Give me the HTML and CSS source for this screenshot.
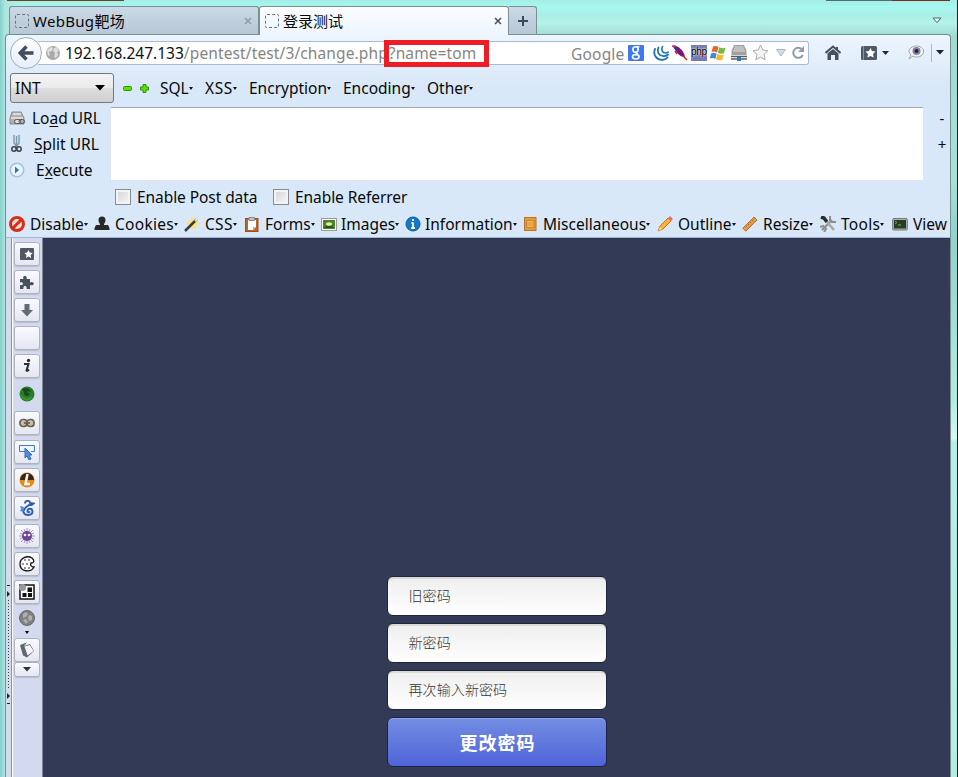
FILE: index.html
```html
<!DOCTYPE html>
<html lang="zh-CN">
<head>
<meta charset="utf-8">
<title>登录测试</title>
<link rel="stylesheet" href="styles.css">
</head>
<body>
<div class="desktop">
<i class="edge edge-left"></i><i class="edge edge-mid"></i><i class="edge edge-right"></i>
<div class="window">
  <div class="tabs">
    <div class="tab tab-idle"><span class="favicon"></span><span class="tab-title">WebBug靶场</span><svg class="close" viewBox="0 0 8 8"><path d="M1 1l6 6M7 1l-6 6"/></svg></div>
    <div class="tab tab-active"><span class="favicon"></span><span class="tab-title">登录测试</span><svg class="close" viewBox="0 0 8 8"><path d="M1 1l6 6M7 1l-6 6"/></svg></div>
    <div class="new-tab"><svg width="12" height="12" viewBox="0 0 12 12"><path d="M6 1v10M1 6h10" stroke="#3b4a5a" stroke-width="2"/></svg></div>
    <svg class="tab-list" width="10" height="7" viewBox="0 0 10 7"><path d="M1 1h8L5 5.6z" fill="#eafffa" stroke="#446a68"/></svg>
  </div>
  <div class="chrome">
    <div class="nav">
      <div class="back"><svg width="16" height="16" viewBox="0 0 16 16"><path d="M8.500 1.500L2.200 8l6.300 6.500M2.500 8H15.500" fill="none" stroke="#414d5c" stroke-width="3.400"/></svg></div>
      <div class="address">
        <svg class="globe" width="16" height="16" viewBox="0 0 16 16"><circle cx="8" cy="8" r="7" fill="#a9a9a9"/><path d="M2 5l4-3 2 1-1 3-3 1 1 3-2 1zM9 3l3-1 2 4-2 1 1 3-2 3-2-1 1-4-2-2z" fill="#dedede"/></svg>
        <span class="url"><b>192.168.247.133</b><span class="path">/pentest/test/3/change.php</span><span class="query">?name=tom</span></span>
        <span class="mark"></span>
        <span class="engine">Google</span>
        <div class="address-icons">
          <svg width="16" height="16" viewBox="0 0 16 16"><rect width="16" height="16" rx="1" fill="#3f77f2"/><g fill="none" stroke="#fff" stroke-width="1.600"><ellipse cx="7.500" cy="4.500" rx="2.600" ry="2.700"/><path d="M8.500 1.800h3M8.500 7.200v1.300l1.500 1"/><ellipse cx="7.800" cy="11.800" rx="3.300" ry="2.200"/></g></svg>
          <svg width="16" height="16" viewBox="0 0 16 16"><g fill="none" stroke="#2074b2" stroke-linecap="round"><path d="M2 4C-.500 10 4 15.500 10 14.800c2-.200 3.500-1 4.500-2.300" stroke-width="1.900"/><path d="M5.500 2.500C3.500 7.500 6.500 11.500 11 11.200c1.800 0 3-.700 4-1.700" stroke-width="1.800"/><path d="M9.500 1.500C8 5 9.500 8 12.500 8c1 0 2-.300 2.800-1" stroke-width="1.600"/></g></svg>
          <svg width="16" height="16" viewBox="0 0 16 16"><path d="M1 1c4-1 11 4 12 11C7 12 4 7 1 1z" fill="#a50e52"/><path d="M2 1l8 9" stroke="#4225ae" stroke-width="2.500"/><path d="M0 1l4 .500M5 9l-2-3M11 11l4 4" stroke="#d02936" stroke-width="1.500"/></svg>
          <span class="php">php</span>
          <svg width="16" height="16" viewBox="0 0 16 16"><path d="M3 1.500q3-1 5.500.500L7 7.500q-2.500-1.500-5.500-.500z" fill="#e8632a"/><path d="M9.300 2.300q3 1.700 6.200.500L14 8.300q-3.200 1-6.200-.500z" fill="#75b943"/><path d="M1.200 8.200q3-1 5.500.500L5.200 14q-2.500-1.500-5.500-.500z" fill="#438bd0"/><path d="M7.400 9q3 1.500 6.300.500L12.200 15q-3.300 1-6.300-.700z" fill="#f4b72d"/></svg>
          <svg width="16" height="16" viewBox="0 0 16 16"><path d="M3 0h10l2.500 6v4H.500V6z" fill="#a0a0a0"/><path d="M3.500 2h9M3 4h10M2 6h12" stroke="#e0e0e0"/><path d="M0 11.500h16M0 14h6m4 0h6" stroke="#5d5d5d" stroke-width="1.600"/><rect x="6" y="12" width="4" height="4" fill="#3077c5"/></svg>
          <svg width="17" height="17" viewBox="0 0 17 17"><path d="M8.500 1l2.200 5 5.300.600-4 3.700 1.200 5.500-4.700-2.700-4.700 2.700L5 10.300 1 6.600 6.300 6z" fill="#f5f5f5" stroke="#aaa"/></svg>
          <svg width="10" height="8" viewBox="0 0 10 8"><path d="M.5.500h9L5 7z" fill="#d5dee7" stroke="#aab5c1"/></svg>
          <svg width="13" height="13" viewBox="0 0 13 13"><path d="M10 3.500a5 5 0 1 0 .800 5.500" fill="none" stroke="#8f9cab" stroke-width="2"/><path d="M12 0v6H6z" fill="#8f9cab"/></svg>
        </div>
      </div>
      <svg class="home" width="16" height="16" viewBox="0 0 16 16"><path d="M.5 8L8 1.500 15.500 8M12 2v3" fill="none" stroke="#46515d" stroke-width="2"/><path d="M2.500 8.500L8 4l5.500 4.500V15H10v-5H6v5H2.500z" fill="#46515d"/></svg>
      <svg class="marks" width="29" height="16" viewBox="0 0 29 16"><rect y="1" width="16" height="14" rx="1.500" fill="#4d5966"/><path d="M2.500 1v14" stroke="#8895a2"/><path d="M9.500 3l1.500 3 3.500.500L12 9l.600 3.500L9.500 11l-3.100 1.500L7 9 4.500 6.500 8 6z" fill="#fff"/><path d="M21 6h7l-3.500 4z" fill="#222a35"/></svg>
      <svg class="eye" width="17" height="15" viewBox="0 0 17 15"><path d="M3 10C-2 6 3 1 8.500 1S17 5 15 9c-2 3-7 4-10 2L1 14z" fill="#f2f2f7" stroke="#a4a4ad"/><circle cx="8.500" cy="6" r="4" fill="#8c8198"/><circle cx="8.500" cy="6" r="2" fill="#1a2455"/></svg>
      <span class="divider"></span>
      <svg width="8" height="5" viewBox="0 0 8 5"><path d="M0 0h8L4 4.500z" fill="#1b2530"/></svg>
    </div>
    <div class="menus">
      <div class="select">INT<svg width="10" height="6" viewBox="0 0 10 6"><path d="M0 0h10L5 5.500z"/></svg></div>
      <svg class="minus" width="9" height="5" viewBox="0 0 9 5"><rect x=".5" y=".5" width="8" height="4" rx="1" fill="#5be000" stroke="#2f9700"/></svg>
      <svg class="plus" width="9" height="9" viewBox="0 0 9 9"><path d="M3 .500h3V3h2.500v3H6v2.500H3V6H.500V3H3z" fill="#5be000" stroke="#2f9700"/></svg>
      <span class="drop m-sql">SQL</span><span class="drop m-xss">XSS</span><span class="drop m-enc">Encryption</span><span class="drop m-cod">Encoding</span><span class="drop">Other</span>
    </div>
    <div class="hackbar">
      <div class="actions">
        <div class="action"><svg width="16" height="15" viewBox="0 0 16 15"><path d="M3 1h9l3 6v6H1V7z" fill="#b0b0b0" stroke="#898989"/><path d="M4 3h8M2 7h12" stroke="#e8e8e8" stroke-width="1.300"/><rect x="5.500" y="8.500" width="6" height="4" rx="2" fill="#ddd" stroke="#555"/><rect x="10" y="8.500" width="5.500" height="4" rx="2" fill="none" stroke="#555"/></svg><span class="load">Lo<u>a</u>d URL</span></div>
        <div class="action"><svg width="16" height="18" viewBox="0 0 16 18"><path d="M5 0v8l4 5M10 0v8l-4 5M7.500 1v10" stroke="#7b98ab" stroke-width="1.400" fill="none"/><circle cx="5" cy="14" r="2.200" fill="none" stroke="#3d4044" stroke-width="1.500"/><circle cx="10" cy="14" r="2.200" fill="none" stroke="#3d4044" stroke-width="1.500"/></svg><span class="split"><u>S</u>plit URL</span></div>
        <div class="action"><svg width="16" height="16" viewBox="0 0 16 16"><circle cx="8" cy="8" r="6.700" fill="#e9f5ff" stroke="#a3c1e2" stroke-width="1.600"/><path d="M6 4.500l4 3.500-4 3.500z" fill="#2875bd"/></svg><span class="exec">E<u>x</u>ecute</span></div>
      </div>
      <div class="textarea"></div>
      <div class="resize"><span>-</span><span>+</span></div>
    </div>
    <div class="checks"><i class="box"></i><span class="post">Enable Post data</span><i class="box"></i><span class="ref">Enable Referrer</span></div>
    <div class="dev">
      <svg viewBox="0 0 16 16"><circle cx="8" cy="8" r="6.500" fill="#ffdfd7" stroke="#d52d18" stroke-width="3"/><path d="M3.500 12.500l9-9" stroke="#d52d18" stroke-width="3"/></svg><span class="drop">Disable</span>
      <svg viewBox="0 0 16 16"><path d="M4.500 4a3.500 3.500 0 0 1 7 0c0 3-1.500 3-1.500 5h4l1.500 3v2H.500v-2L2 9h4c0-2-1.500-2-1.500-5z" fill="#292929"/></svg><span class="drop wide">Cookies</span>
      <svg viewBox="0 0 16 16"><path d="M8 0l2 4 4-2-1 4 3 2-4 2v4l-4-2-4 1 1-4-3-2 4-2z" fill="#ffe37c"/><path d="M1 15L13 3" stroke="#3c3c3c" stroke-width="2.500"/><path d="M11 5l3-3" stroke="#ddd" stroke-width="2.500"/></svg><span class="drop wide">CSS</span>
      <svg viewBox="0 0 16 16"><rect x="1.500" y="2.500" width="12.500" height="13" fill="#bb6528" stroke="#9e4e1b"/><path d="M4 4h8v7l-3 3H4z" fill="#fff"/><path d="M12 11H9v3" fill="#b4b4b4"/><path d="M5 1.500h5.500v3H5z" fill="#c1c6cb" stroke="#888"/></svg><span class="drop">Forms</span>
      <svg viewBox="0 0 16 16"><rect x=".5" y="2.500" width="15" height="12" fill="#fff" stroke="#999"/><path d="M2 4h12v9H2z" fill="#4c8624"/><path d="M3 12l3-3 2 1 2-1 3 3z" fill="#1f5b16"/><ellipse cx="8" cy="8" rx="3" ry="1.800" fill="#e6e9b8"/></svg><span class="drop">Images</span>
      <svg viewBox="0 0 16 16"><circle cx="8" cy="8" r="7" fill="#1478c9" stroke="#0b5ba6"/><path d="M8 3v2M8 6.500V12M6 12h4M6.500 7H8" stroke="#fff" stroke-width="1.800"/></svg><span class="drop">Information</span>
      <svg viewBox="0 0 16 16"><rect x="1.500" y="1.500" width="11.500" height="13" fill="#e39a3c" stroke="#b87526"/><rect x="3.500" y="4.500" width="7.500" height="7" fill="#f3b75b" stroke="#c9842d"/><path d="M4 7h7M4 9h7" stroke="#d9963c"/></svg><span class="drop">Miscellaneous</span>
      <svg viewBox="0 0 16 16"><path d="M1 15l2-5 8-8 3 3-8 8z" fill="#ffb02d" stroke="#c07820"/><path d="M1 15l2-4 2 2z" fill="#ead7b9"/><path d="M11 2l2-2 3 3-2 2z" fill="#df6f82"/></svg><span class="drop">Outline</span>
      <svg viewBox="0 0 16 16"><path d="M.800 12.200L12 1l3 3L3.800 15.200z" fill="#e49a48" stroke="#b56d26"/><path d="M4 10l1 1m1-3l1 1m1-3l1 1m1-3l1 1" stroke="#a9682a"/></svg><span class="drop">Resize</span>
      <svg viewBox="0 0 16 16"><path d="M2 14L12 4M10 0v4l2 2h4M0 11l3-1 3 3-2 3" stroke="#8d8d8d" stroke-width="2" fill="none"/><path d="M1 1l3 1 3 4" stroke="#292929" stroke-width="3.500" fill="none"/><path d="M7 6l7 8" stroke="#a8a8a8" stroke-width="2.500"/></svg><span class="drop wide">Tools</span>
      <svg viewBox="0 0 16 16"><rect x=".7" y="2.500" width="14.600" height="11.500" rx="1" fill="#b0b0b0" stroke="#777"/><rect x="2" y="4" width="12" height="8.500" fill="#263e22"/><path d="M3 5l2 1.500L3 8m3 1h3" stroke="#72ae63" fill="none"/></svg><span>View</span>
    </div>
  </div>
  <div class="main">
    <div class="grip"><i></i></div>
    <div class="sidebar">
      <div class="tool"><svg viewBox="0 0 16 16"><rect x="1" y="2" width="14" height="12" rx="1" fill="#505962"/><path d="M9.500 4l1.300 2.500 3 .500-2.200 2 .500 3-2.600-1.500L7 12l.500-3-2-2 2.700-.500z" fill="#fff"/></svg></div>
      <div class="tool"><svg viewBox="0 0 16 16"><path d="M1 5h3.500c-2-4 4.500-4 3 0H11v3.500c4-2.500 6 4 0 2.500v4H7.500c1-4-4-4-3 0H1v-4c4 1 4-3.500 0-2.500z" fill="#46525c"/></svg></div>
      <div class="tool"><svg viewBox="0 0 16 16"><path d="M5.500 2h5v6H14l-6 6.500L2 8h3.500z" fill="#626b76"/></svg></div>
      <div class="tool"></div>
      <div class="tool"><svg viewBox="0 0 16 16"><path d="M5 6h4.500l-2 6.500q.5 1 2.500-1" fill="none" stroke="#292e34" stroke-width="2"/><circle cx="9.500" cy="2.500" r="1.700" fill="#292e34"/></svg></div>
      <div class="tool bare"><svg viewBox="0 0 16 16"><circle cx="8" cy="8" r="7.500" fill="#277f23"/><path d="M3 3c5-2 9 0 9 4-1-2-3-2-4-1l3 2c-3 4-7 1-6-2" fill="#174c20"/><path d="M2 9c2 5 8 6 11 2" stroke="#419233" stroke-width="2" fill="none"/></svg></div>
      <div class="tool"><svg viewBox="0 0 16 16"><g fill="#c9bdab" stroke="#6b6154" stroke-width="1.700"><rect x="1" y="4.500" width="7" height="7" rx="3"/><rect x="8" y="4.500" width="7" height="7" rx="3"/><path d="M5 8h6"/></g></svg></div>
      <div class="tool"><svg viewBox="0 0 16 16"><path d="M6 7.500H.500v-6h15v6H12" fill="#eef6ff" stroke="#467bc1"/><path d="M6 4l7 7h-3l2 4-2 1-2-4-2 2z" fill="#4c8ee5" stroke="#356ab7"/></svg></div>
      <div class="tool"><svg viewBox="0 0 16 16"><circle cx="8" cy="8" r="7.500" fill="#e9871b"/><path d="M1 8a7 7 0 0 1 14 0z" fill="#3b2616"/><path d="M8.500 2L6.500 12H11" fill="none" stroke="#fff" stroke-width="2.500"/></svg></div>
      <div class="tool"><svg viewBox="0 0 16 16"><path d="M6 3.500C6 0 11 0 11 3l3.500.500-2 1.500H10C7 7 4 9 4.500 12c1 4 9 4 9-.500 0-3.500-5-3.500-5-.500 0 1.500 2 1.500 2 .300" fill="none" stroke="#315fb0" stroke-width="2"/><path d="M1 6l4 1-1 5-3-1 1-2z" fill="#5b8cce"/></svg></div>
      <div class="tool"><svg viewBox="0 0 16 16"><path d="M8 0v16M0 8h16M2 2l12 12M14 2L2 14M5 1l6 14M11 1L5 15M1 5l14 6M1 11l14-6" stroke="#9a78bb" stroke-width=".8"/><circle cx="8" cy="8" r="5" fill="#704795"/><circle cx="6" cy="7" r="1.300" fill="#fff"/><circle cx="10" cy="7" r="1.300" fill="#fff"/></svg></div>
      <div class="tool"><svg viewBox="0 0 16 16"><path d="M13 2C8-1 1 2 1 8c0 8 11 9 14 3-3 0-4-2-3-4 3 0 4-2 1-5z" fill="#fff" stroke="#111" stroke-width="1.300"/><g fill="#111"><circle cx="6" cy="4" r=".8"/><circle cx="10" cy="4" r=".8"/><circle cx="4" cy="8" r=".8"/><circle cx="8" cy="8" r=".8"/><circle cx="6" cy="12" r=".8"/><circle cx="10" cy="12" r=".8"/></g></svg></div>
      <div class="tool"><svg viewBox="0 0 16 16"><rect x="1" y="1" width="14" height="14" fill="#fff" stroke="#111" stroke-width="1.500"/><path d="M8.500 3.500H13V8H8.500zM3.500 9H7.500v4H3.500zM9 9h4v4H9z" fill="#111"/><circle cx="3.500" cy="3.500" r="3.500" fill="#999"/></svg></div>
      <div class="tool bare sphere"><svg viewBox="0 0 16 16"><circle cx="8" cy="8" r="7.500" fill="#818181" stroke="#666"/><path d="M4 4l3-2 2 2-2 3-3 1zM10 5l3 1v4l-3 1-1-3zM4 10l3-1 2 3-2 2z" fill="#b0b0b0"/></svg><svg class="tiny" viewBox="0 0 4 3"><path d="M0 0h4L2 3z"/></svg></div>
      <div class="tool stacked"><svg viewBox="0 0 16 16"><path d="M1 3l7-2.500L5 4l6-2 4 7-7 6.500-4-2z" fill="#5f686e"/><path d="M5.500 4.500L10.800 3l3.800 6-6 4.500z" fill="#f5f5ff"/></svg></div>
      <div class="tool more"><svg viewBox="0 0 8 5"><path d="M0 0h8L4 4.500z" fill="#27343d"/></svg></div>
    </div>
    <div class="page">
      <form class="form">
        <div class="field">旧密码</div>
        <div class="field">新密码</div>
        <div class="field">再次输入新密码</div>
        <button class="submit" type="button">更改密码</button>
      </form>
    </div>
  </div>
</div>
</div>
</body>
</html>
```
FILE: styles.css
```css
* { box-sizing: border-box; }
body { margin: 0; font: 15.5px/20px "Noto Sans", "Noto Sans CJK SC", sans-serif; color: #080808; }
svg { display: block; flex: none; }
.desktop { position: relative; width: 958px; height: 777px; overflow: hidden; padding-left: 5px; border-right: 1px solid #101c20;
  background: linear-gradient(90deg, #83d0cb 0, #aee4df 5px, transparent 20px), linear-gradient(#a5eee7 0, #a6f8ef 7px, #a8eee6 15px, #b7f2e9 23px, #9edbd2 36px, #a9dfda 180px, #8ed3cc 238px, #b0ece3 400px, #d7f6f0 438px, #b3efe8 442px, #b1eee5 100%); }
.edge { position: absolute; top: 0; height: 1px; background: #72411e; }
.edge-left { left: 7px; width: 117px; }
.edge-mid { left: 826px; width: 66px; background: #526e6e; }
.edge-right { left: 892px; width: 58px; background: #7b2d28; }
.window { width: 946px; height: 777px; display: flex; flex-direction: column; }
.tabs { height: 34px; flex: none; display: flex; align-items: flex-end; padding-left: 4px; }
.tab { display: flex; align-items: center; border: 1px solid #79908f; border-bottom: 0; border-radius: 3px 3px 0 0; padding: 0 6px 0 5px; font-size: 15px; }
.tab-idle { width: 250px; height: 28px; background: linear-gradient(#cbd9e6, #b7c7d5); }
.tab-idle .tab-title { letter-spacing: .3px; }
.tab-active { width: 250px; height: 29px; background: linear-gradient(#fbfdff, #edf5fd); margin-bottom: -1px; z-index: 1; }
.tab-title { flex: 1; margin-left: 4px; white-space: nowrap; }
.favicon { width: 14px; height: 14px; border: 1px dashed #68727d; border-radius: 2px; }
.close { width: 8px; height: 8px; fill: none; stroke: #929da6; stroke-width: 1.6; }
.tab-active .close { stroke: #48515a; }
.new-tab { width: 28px; height: 28px; border: 1px solid #79908f; border-left: 0; border-bottom: 0; border-radius: 0 3px 0 0; background: linear-gradient(#cbd9e6, #b7c7d5); display: grid; place-items: center; }
.tab-list { margin: 0 9px 10px auto; }
.chrome { height: 204px; flex: none; border: 1px solid #72918f; border-bottom-color: #a2b7d0; border-radius: 4px 4px 0 0; background: linear-gradient(#edf5fd 0, #d9e8f8 50px); overflow: hidden; }
.nav { height: 35px; display: flex; align-items: center; }
.back { width: 32px; height: 32px; margin-left: 4px; border: 1px solid #9cabb9; border-radius: 50%; background: linear-gradient(#fff, #e6eef7); display: grid; place-items: center; z-index: 1; flex: none; }
.address { position: relative; width: 771px; height: 24px; margin-left: -4px; border: 1px solid #a9bbcd; border-left: 0; border-radius: 0 3px 3px 0; background: #fff; display: flex; align-items: center; color: #858585; flex: none; }
.globe { margin-left: 7px; }
.url { margin-left: 4px; white-space: nowrap; }
.url b { font-weight: 400; color: #111; }
.path { letter-spacing: .12px; }
.query { margin-left: 1px; letter-spacing: .1px; }
.mark { position: absolute; left: 346px; top: -2px; width: 105px; height: 27px; border: 5px solid #ee1c25; }
.engine { position: absolute; left: 533px; top: 2px; letter-spacing: .2px; }
.address-icons { position: absolute; left: 590px; top: 2px; height: 18px; display: grid; grid-template-columns: 25px 19px 19px 19px 21px 21px 24px 16px 14px; align-items: center; }
.php { width: 16px; height: 16px; background: #777bb4; color: #000; font: 10px/14px "Liberation Sans", sans-serif; text-shadow: 0 0 2px #fff, 0 0 2px #fff; letter-spacing: -.3px; text-align: center; }
.home { margin-left: 16px; }
.marks { margin-left: 20px; }
.eye { margin-left: 18px; }
.divider { width: 1px; height: 18px; background: #aeb9c5; margin: 0 4px 0 6px; }
.menus { height: 37px; display: flex; align-items: center; padding: 0 0 1px 4px; white-space: nowrap; }
.select { width: 104px; height: 30px; border: 1px solid #72777b; border-radius: 3px; background: linear-gradient(#f3f3f3 0, #ebebeb 49%, #dddddd 50%, #d0d0d0); display: flex; align-items: center; justify-content: space-between; padding: 0 8px 0 4px; }
.minus { margin-left: 9px; }
.plus { margin: 0 11px 0 8px; }
.drop::after { content: ""; display: inline-block; border: 2px solid transparent; border-top: 3px solid #111; border-bottom: 0; vertical-align: 4px; }
.m-sql { width: 45px; }
.m-xss { width: 44px; letter-spacing: .6px; }
.m-enc { width: 94px; }
.m-cod { width: 84px; }
.hackbar { height: 74px; display: flex; padding-left: 3px; }
.actions { width: 102px; flex: none; }
.action { height: 26px; display: flex; align-items: center; white-space: nowrap; position: relative; top: -2px; }
.load { margin-left: 7px; }
.split { margin-left: 9px; }
.exec { margin-left: 11px; }
u { text-decoration-thickness: 1px; text-underline-offset: 2px; }
.textarea { width: 814px; height: 74px; background: #fff; border: 1px solid #dfe5eb; border-top-color: #9ca7af; border-radius: 2px; margin-left: -1px; flex: none; }
.resize { width: 26px; padding: 1px 0 0 10px; display: flex; flex-direction: column; align-items: center; gap: 6px; line-height: 20px; font-size: 15px; }
.checks { height: 31px; display: flex; align-items: center; padding-left: 109px; }
.box { width: 16px; height: 16px; border: 1px solid #858b91; background: linear-gradient(135deg, #cfd2d7, #f8f8f8); box-shadow: inset 0 0 0 2px #f4f4f4; margin-right: 6px; }
.post { width: 136px; letter-spacing: -.07px; }
.ref { letter-spacing: -.07px; }
.dev { height: 24px; display: grid; grid-template-columns: 21px 64px 21px 69px 21px 39px 21px 56px 20px 64px 20px 98px 20px 114px 21px 64px 21px 57px 21px 51px 21px 40px; align-items: center; padding-left: 3px; white-space: nowrap; }
.dev > svg { width: 16px; height: 16px; }
.wide { letter-spacing: .3px; }
.main { height: 539px; display: flex; border-left: 1px solid #7c908f; border-right: 1px solid #7c908f; }
.grip { width: 6px; background: #d4dbef; border-right: 1px solid #8d929f; padding: 347px 0 0 1px; flex: none; }
.grip i { display: block; height: 119px; width: 3px; border: 1px solid #222; border-left: 0; border-right: 0; background: repeating-linear-gradient(#3c4049 0 1px, transparent 1px 3px) 1px 14px/1px 88px no-repeat; position: relative; }
.grip i::before, .grip i::after { content: ""; position: absolute; left: 0; top: 5px; border: 3px solid transparent; border-left-color: #222; border-right: 0; }
.grip i::after { top: 107px; }
.sidebar { width: 31px; background: #d3daef; border-left: 1px solid #fff; border-right: 1px solid #84899a; padding: 4px 0 0 1px; display: flex; flex-direction: column; flex: none; }
.tool { width: 26px; height: 24px; margin-bottom: 4.1px; border: 1px solid #aeb3bf; border-radius: 3px; background: linear-gradient(#f9faff, #e4e7f1); box-shadow: 0 1px 1px #b8bdca; display: grid; place-items: center; flex: none; }
.tool svg { width: 16px; height: 16px; }
.tool.bare { border: 0; background: none; box-shadow: none; margin-bottom: 5px; }
.tool.sphere { height: 28px; margin-bottom: 2px; }
.tool .tiny { width: 4px; height: 3px; }
.tool.stacked { margin-bottom: 0; }
.tool.more { height: 15px; }
.tool.more svg { width: 8px; height: 5px; }
.page { flex: 1; background: #323a56; box-shadow: inset 0 1px #29334b; display: flex; justify-content: center; }
.form { width: 220px; margin: 338px 0 0; display: flex; flex-direction: column; gap: 7px; font-family: "Noto Sans CJK SC", sans-serif; }
.field { height: 40px; border: 1px solid #202539; border-radius: 6px; background: linear-gradient(#eee, #fff); box-shadow: inset 0 2px #d9d9d9; padding: 8px 20px 0 21px; color: #333; font-size: 14px; font-weight: 300; letter-spacing: .1px; }
.submit { height: 50px; border: 1px solid #1c2342; border-radius: 6px; background: linear-gradient(#738de2, #5064da); box-shadow: inset 0 1px #91a7ed; color: #fff; font: 600 18px/26px "Noto Sans CJK SC", sans-serif; letter-spacing: 1px; padding: 0 0 1px 2px; }
```
